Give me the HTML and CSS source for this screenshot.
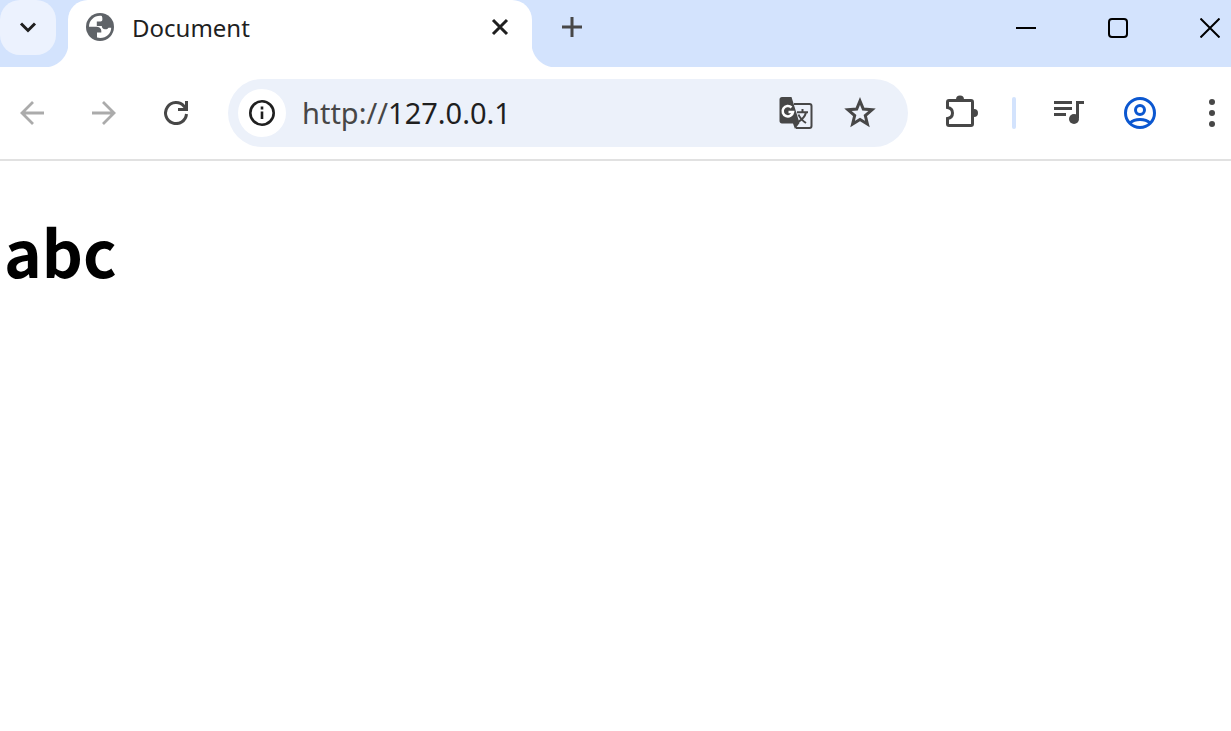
FILE: index.html
```html
<!DOCTYPE html>
<html lang="en">
<head>
  <meta charset="UTF-8" />
  <title>Document</title>
  <link rel="stylesheet" href="styles.css">
</head>
<body>
  <header class="tabstrip">
    <button class="tab-search" aria-label="Search tabs">
      <svg width="20" height="22" viewBox="0 0 20 22"><path d="M3 6.500l7 7 7-7" fill="none" stroke="#1f1f1f" stroke-width="3"/></svg>
    </button>
    <div class="tab">
      <svg width="28" height="28" viewBox="0 0 28 28">
        <circle cx="14" cy="14" r="14" fill="#5f6368"/>
        <path d="M15.800 3C9 2 3 7 3 13.800h6.500c3.600 0 5.800 1.400 5.800 4.200v1.400h-4.300v5.200C18.500 26.500 25.300 21.500 25.200 14.800h-2.700c-1 1.400-2 1.700-3.500 1.500-2-.3-3.200-1.300-3.200-3.300h-5V8.500h3.700c1.200 0 1.900-.8 1.900-2.200 0-1.200-.1-2.200-.6-3.300z" fill="#fff"/>
      </svg>
      <span class="tab-title">Document</span>
      <button class="tab-close" aria-label="Close tab">
        <svg width="18" height="18" viewBox="0 0 18 18"><path d="M2 2l14 14M16 2L2 16" stroke="#1f1f1f" stroke-width="3"/></svg>
      </button>
    </div>
    <button class="new-tab" aria-label="New tab">
      <svg width="20" height="20" viewBox="0 0 20 20"><path d="M10 0v20M0 10h20" stroke="#474747" stroke-width="3"/></svg>
    </button>
    <div class="window-controls">
      <button aria-label="Minimize">
        <svg width="20" height="20" viewBox="0 0 20 20"><path d="M0 10h20" stroke="#000" stroke-width="2"/></svg>
      </button>
      <button aria-label="Maximize">
        <svg width="20" height="20" viewBox="0 0 20 20"><rect x="1" y="1" width="18" height="18" rx="3" fill="none" stroke="#000" stroke-width="2"/></svg>
      </button>
      <button aria-label="Close">
        <svg width="20" height="20" viewBox="0 0 20 20"><path d="M.5 .5l19 19M19.500 .5l-19 19" stroke="#000" stroke-width="2"/></svg>
      </button>
    </div>
  </header>

  <nav class="toolbar">
    <button aria-label="Back" disabled>
      <svg width="24" height="24" viewBox="0 0 24 24"><path d="M24 12H2M13 1L2 12l11 11" fill="none" stroke="#ababab" stroke-width="2.800"/></svg>
    </button>
    <button aria-label="Forward" disabled>
      <svg width="24" height="24" viewBox="0 0 24 24"><path d="M0 12h22M11 1l11 11-11 11" fill="none" stroke="#ababab" stroke-width="2.800"/></svg>
    </button>
    <button aria-label="Reload">
      <svg width="24" height="24" viewBox="0 0 24 24"><path d="M22.500 13A10.500 10.500 0 1 1 20 5.200L22 8M22.500 0v8.500H14" fill="none" stroke="#474747" stroke-width="3"/></svg>
    </button>

    <div class="omnibox">
      <button class="site-info" aria-label="View site information">
        <svg width="26" height="26" viewBox="0 0 26 26">
          <circle cx="13" cy="13" r="11.700" fill="none" stroke="#1f1f1f" stroke-width="2.600"/>
          <path d="M13 11.500V19M13 6.500v3" stroke="#1f1f1f" stroke-width="2.600"/>
        </svg>
      </button>
      <label class="scheme" for="url">http://</label>
      <input class="url" id="url" type="text" value="127.0.0.1" spellcheck="false">
      <button aria-label="Translate this page">
        <svg width="34" height="34" viewBox="0 0 34 34">
          <path d="M15 8h15.500c1 0 2 1 2 2v20c0 1-1 2-2 2H17" fill="none" stroke="#474747" stroke-width="2"/>
          <path d="M3 1h9.500l2 6.500L20.500 27 16 33l-2-5.500H3C1.500 27.500.5 26.500.5 25V3.500C.5 2 1.500 1 3 1z" fill="#474747"/>
          <path d="M12.500 11.500A5.200 5.200 0 1 0 14 16H9.500" fill="none" stroke="#fff" stroke-width="2.600"/>
          <path d="M18 16.200h11M23.500 13v3.200M27 16.500c-1 4-4.500 7.500-8 9.500M19.500 18.500c1.500 4 4.500 6.500 7.500 8.500" fill="none" stroke="#474747" stroke-width="2"/>
        </svg>
      </button>
      <button aria-label="Bookmark this tab">
        <svg width="32" height="32" viewBox="0 0 32 32"><path d="M16 4l3.300 8.100 8.700.7-6.700 5.700 2.100 8.500-7.400-4.600L8.600 27l2.100-8.500L4 12.800l8.700-.7z" fill="none" stroke="#474747" stroke-width="3"/></svg>
      </button>
    </div>

    <button aria-label="Extensions">
      <svg width="36" height="36" viewBox="0 0 36 36">
        <path d="M7 5.500h22c1 0 1.500.5 1.500 1.500v22c0 1-.5 1.500-1.500 1.500H7c-1 0-1.500-.5-1.500-1.500v-5.500c3.500-.5 5-2.500 5-5.500s-1.500-5-5-5.500V7c0-1 .5-1.500 1.500-1.500z" fill="none" stroke="#474747" stroke-width="3"/>
        <path d="M14 4.500a4 4 0 0 1 8 0zM32 14a4 4 0 0 1 0 8z" fill="#474747"/>
      </svg>
    </button>
    <span class="divider"></span>
    <button aria-label="Media controls">
      <svg width="32" height="28" viewBox="0 0 32 28">
        <path d="M2 3.500h18M2 9.500h18M2 15.500h12" stroke="#474747" stroke-width="3"/>
        <path d="M32 3.500h-6.500V19" fill="none" stroke="#474747" stroke-width="3"/>
        <circle cx="22" cy="20" r="5" fill="#474747"/>
      </svg>
    </button>
    <button aria-label="Profile">
      <svg width="32" height="32" viewBox="0 0 32 32" fill="none" stroke="#0b57d0" stroke-width="3">
        <circle cx="16" cy="16" r="14.500"/>
        <circle cx="16" cy="13" r="4.500"/>
        <path d="M6 26c2.500-2.500 6-3.500 10-3.500s7.500 1 10 3.500"/>
      </svg>
    </button>
    <button aria-label="Menu">
      <svg width="6" height="28" viewBox="0 0 6 28" fill="#474747"><circle cx="3" cy="3" r="3"/><circle cx="3" cy="14" r="3"/><circle cx="3" cy="25" r="3"/></svg>
    </button>
  </nav>

  <main class="page">
    <h1>abc</h1>
  </main>
</body>
</html>
```
FILE: styles.css
```css
body {
  margin: 0;
  background-color: #fff;
  color: #1f1f1f;
  font-family: "Noto Sans", "Open Sans", sans-serif;
  overflow-x: hidden;
}

button {
  display: flex;
  align-items: center;
  justify-content: center;
  flex-shrink: 0;
  width: 40px;
  height: 40px;
  padding: 0;
  border: none;
  background: none;
}

svg {
  display: block;
  flex-shrink: 0;
}

.tabstrip {
  display: flex;
  height: 67px;
  background-color: #d3e3fd;
}

.tab-search {
  width: 56px;
  height: 55px;
  margin-right: 12px;
  border-radius: 20px;
  background-color: #ecf2fe;
}

.tab {
  position: relative;
  display: flex;
  align-items: center;
  box-sizing: border-box;
  width: 464px;
  padding: 0 12px 13px 18px;
  border-radius: 20px 20px 0 0;
  background-color: #fff;
}

/* curved feet on both sides of the active tab */
.tab::before,
.tab::after {
  content: "";
  position: absolute;
  bottom: 0;
  width: 24px;
  height: 24px;
}

.tab::before {
  right: 100%;
  background: radial-gradient(circle at 0 0, transparent 24px, #fff 25px);
}

.tab::after {
  left: 100%;
  background: radial-gradient(circle at 100% 0, transparent 24px, #fff 25px);
}

.tab-title {
  flex: 1;
  margin-left: 18px;
  font-size: 24px;
}

.new-tab {
  height: 54px;
  margin-left: 20px;
}

.window-controls {
  display: flex;
  gap: 52px;
  margin-left: auto;
  padding-right: 1px;
}

.window-controls button {
  height: 56px;
}

.toolbar {
  display: flex;
  align-items: center;
  gap: 32px;
  margin-right: -1px;
  padding: 12px 0 12px 12px;
  border-bottom: 2px solid #e1e1e1;
}

.omnibox {
  display: flex;
  align-items: center;
  flex: 1;
  min-width: 0;
  height: 68px;
  box-sizing: border-box;
  padding: 0 28px 0 10px;
  border-radius: 34px;
  background-color: #ecf1fa;
  gap: 24px;
}

.site-info {
  width: 48px;
  height: 48px;
  border-radius: 50%;
  background-color: #fff;
}

.scheme,
.url {
  font-size: 29px;
  line-height: 40px;
}

.scheme {
  margin-left: -8px;
  color: #474747;
}

.url {
  flex: 1;
  min-width: 0;
  margin-left: -24px;
  padding: 0;
  border: none;
  outline: none;
  background: none;
  color: #1f1f1f;
  font-family: inherit;
}

.divider {
  width: 4px;
  height: 32px;
  border-radius: 2px;
  background-color: #d3e3fd;
}

.page {
  padding: 37px 4px;
}

h1 {
  margin: 0;
  color: #000;
  font-family: "Noto Sans CJK SC", sans-serif;
  font-size: 64px;
  line-height: 104px;
}
```
